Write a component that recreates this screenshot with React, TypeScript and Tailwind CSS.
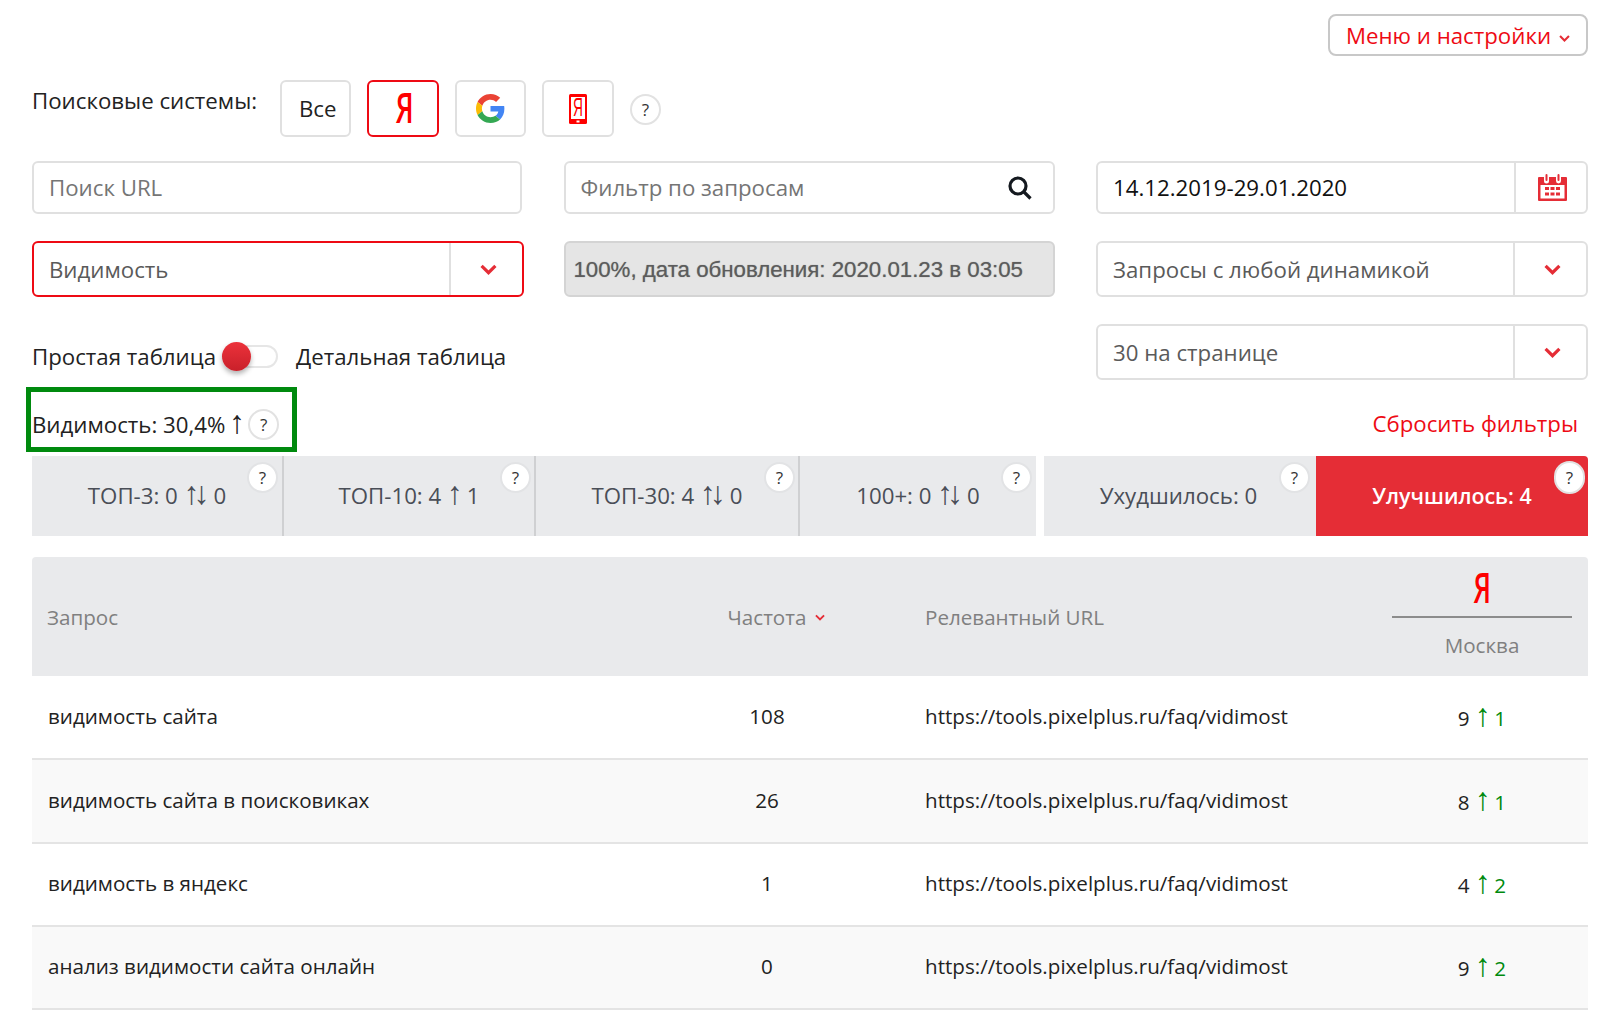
import type { ReactNode } from "react";

const stats = [
  { label: "ТОП-3: 0", arrows: "↑↓", after: "0", width: "w-[252px]", help: "right-[4px]", divider: true },
  { label: "ТОП-10: 4", arrows: "↑", after: "1", width: "w-[252px]", help: "right-[3px]", divider: true },
  { label: "ТОП-30: 4", arrows: "↑↓", after: "0", width: "w-[264px]", help: "right-[3px]", divider: true },
  { label: "100+: 0", arrows: "↑↓", after: "0", width: "w-[236px]", help: "right-[4px]", divider: false },
];

const rows = [
  { query: "видимость сайта", freq: "108", pos: "9", delta: "1" },
  { query: "видимость сайта в поисковиках", freq: "26", pos: "8", delta: "1" },
  { query: "видимость в яндекс", freq: "1", pos: "4", delta: "2" },
  { query: "анализ видимости сайта онлайн", freq: "0", pos: "9", delta: "2" },
];

function Help({ className = "" }: { className?: string }) {
  return (
    <span
      className={`flex h-[31px] w-[31px] items-center justify-center rounded-full border-2 border-[#e2e2e2] bg-white text-[17px] text-[#333] ${className}`}
    >
      ?
    </span>
  );
}

function Arrows({ children }: { children: ReactNode }) {
  return <span className="font-['Liberation_Sans',sans-serif] text-[32px] leading-[0] font-light tracking-[-6px]">{children}</span>;
}

function Chevron({ className = "" }: { className?: string }) {
  return (
    <svg viewBox="0 0 16 10" className={className} fill="none" stroke="currentColor" strokeWidth="3">
      <path d="M1.5 1.5 8 8l6.5-6.5" />
    </svg>
  );
}

function Yandex({ className = "text-[42px]" }: { className?: string }) {
  return (
    <span className={`inline-block origin-center scale-x-[0.66] leading-none font-semibold text-[#fe0000] ${className}`}>
      Я
    </span>
  );
}

function GoogleLogo() {
  return (
    <svg viewBox="0 0 48 48" className="h-[29px] w-[29px]">
      <path fill="#EA4335" d="M24 9.5c3.54 0 6.71 1.22 9.21 3.6l6.85-6.85C35.9 2.38 30.47 0 24 0 14.62 0 6.51 5.38 2.56 13.22l7.98 6.19C12.43 13.72 17.74 9.5 24 9.5z" />
      <path fill="#4285F4" d="M46.98 24.55c0-1.57-.15-3.09-.38-4.55H24v9.02h12.94c-.58 2.96-2.26 5.48-4.78 7.18l7.73 6c4.51-4.18 7.09-10.36 7.09-17.65z" />
      <path fill="#FBBC05" d="M10.53 28.59c-.48-1.45-.76-2.99-.76-4.59s.27-3.14.76-4.59l-7.98-6.19C.92 16.46 0 20.12 0 24c0 3.88.92 7.54 2.56 10.78l7.97-6.19z" />
      <path fill="#34A853" d="M24 48c6.48 0 11.93-2.13 15.89-5.81l-7.73-6c-2.15 1.45-4.92 2.3-8.16 2.3-6.26 0-11.57-4.22-13.47-9.91l-7.98 6.19C6.51 42.62 14.62 48 24 48z" />
    </svg>
  );
}

function PhoneYandex() {
  return (
    <svg viewBox="0 0 18 30" className="h-[30px] w-[18px]">
      <rect x="0" y="0" width="18" height="30" rx="1.5" fill="#fe0000" />
      <rect x="2" y="3" width="14" height="22" fill="#fff" />
      <rect x="7.5" y="26.5" width="3" height="2" fill="#fff" />
      <text x="9" y="22.5" textAnchor="middle" fontSize="25" fill="#fe0000" transform="translate(4 0) scale(0.55 1)" fontFamily="Liberation Sans, sans-serif">
        Я
      </text>
    </svg>
  );
}

function CalendarIcon() {
  return (
    <svg viewBox="0 0 29 27" className="h-[27px] w-[29px]" fill="#e52d36">
      <path d="M1 3h5v4a2.5 2.5 0 0 0 5 0V3h7v4a2.5 2.5 0 0 0 5 0V3h5a1 1 0 0 1 1 1v22a1 1 0 0 1-1 1H1a1 1 0 0 1-1-1V4a1 1 0 0 1 1-1z" />
      <rect x="7.5" y="0" width="2" height="7" rx="1" />
      <rect x="19.5" y="0" width="2" height="7" rx="1" />
      <rect x="2.5" y="11" width="24" height="13.5" fill="#fff" />
      <rect x="7" y="13" width="4" height="3" />
      <rect x="12.5" y="13" width="4" height="3" />
      <rect x="18" y="13" width="4" height="3" />
      <rect x="7" y="18.5" width="4" height="3" />
      <rect x="12.5" y="18.5" width="4" height="3" />
      <rect x="18" y="18.5" width="4" height="3" />
    </svg>
  );
}

function EngineButton({ children, active = false }: { children: ReactNode; active?: boolean }) {
  return (
    <button
      className={`flex h-[57px] w-[71.5px] items-center justify-center rounded-md border-2 bg-white ${
        active ? "border-[#ee0a14]" : "border-[#e0e0e0]"
      }`}
    >
      {children}
    </button>
  );
}

function Select({ label, className = "", divider = "w-[73px]" }: { label: string; className?: string; divider?: string }) {
  return (
    <div className={`flex h-[56px] items-center rounded-md border-2 border-[#e0e0e0] bg-white text-[#5a5a5a] ${className}`}>
      <span className="flex-1 pt-[2px] pl-[15px]">{label}</span>
      <span className={`flex h-full items-center justify-center border-l-2 border-[#e0e0e0] pl-[3px] ${divider}`}>
        <Chevron className="h-[11px] w-[17px] text-[#e52d36]" />
      </span>
    </div>
  );
}

export default function App() {
  return (
    <div className="h-[1036px] w-[1600px] overflow-hidden bg-white pr-3 pl-8 font-['Open_Sans',sans-serif] text-[22.25px] text-[#222]">
      <div className="flex justify-end pt-[14px]">
        <button className="flex h-[42px] w-[260px] items-center justify-center gap-2 rounded-lg border-2 border-[#c8c8c8] bg-white pt-[2px] text-[#ee0a14]">
          Меню и настройки
          <Chevron className="mt-1 h-[7px] w-[11px] text-[#e52d36]" />
        </button>
      </div>

      <div className="mt-[24px] flex items-start">
        <span className="mt-[7px] w-[247.5px] leading-[28px]">Поисковые системы:</span>
        <div className="flex gap-[16px]">
          <EngineButton>
            <span className="mt-[1px] pl-[5px]">Все</span>
          </EngineButton>
          <EngineButton active>
            <span className="pl-[3px]">
              <Yandex />
            </span>
          </EngineButton>
          <EngineButton>
            <GoogleLogo />
          </EngineButton>
          <EngineButton>
            <PhoneYandex />
          </EngineButton>
        </div>
        <Help className="mt-[14px] ml-[16.5px]" />
      </div>

      <div className="mt-[24px] grid grid-cols-[490px_491px_492px] gap-x-[41.5px] gap-y-[27px]">
        <div className="flex h-[53px] items-center rounded-md border-2 border-[#e0e0e0] pl-[15px] text-[#757575]">Поиск URL</div>
        <div className="flex h-[53px] items-center justify-between rounded-md border-2 border-[#e0e0e0] pr-[21px] pl-[15px] text-[#757575]">
          Фильтр по запросам
          <svg viewBox="0 0 24 24" className="h-[24px] w-[24px] text-[#14191f]" fill="none" stroke="currentColor" strokeWidth="3.2">
            <circle cx="10" cy="10" r="8" />
            <path d="m16 16 6.5 6.5" />
          </svg>
        </div>
        <div className="flex h-[53px] items-center rounded-md border-2 border-[#e0e0e0] text-[#111]">
          <span className="flex-1 pl-[15px]">14.12.2019-29.01.2020</span>
          <span className="flex h-full w-[72px] items-center justify-center border-l-2 border-[#e0e0e0] pl-[2px]">
            <CalendarIcon />
          </span>
        </div>

        <Select label="Видимость" className="-mr-[2px] border-[#ee0a14]" />
        <div className="flex h-[56px] items-center rounded-md border-2 border-[#d4d4d4] bg-[#e5e5e5] pt-[2px] pl-[8px] font-['Liberation_Sans',sans-serif] text-[#5c5c5c] [text-shadow:0_0_1px_#888]">
          100%, дата обновления: 2020.01.23 в 03:05
        </div>
        <Select label="Запросы с любой динамикой" />

        <div className="col-span-2 mt-[16px] flex items-center self-start">
          <span className="w-[190px]">Простая таблица</span>
          <span className="relative h-[23px] w-[56px] rounded-full border-2 border-[#e6e6e6] bg-white">
            <span className="absolute top-[-5px] left-[-2px] h-[29px] w-[29px] rounded-full bg-gradient-to-b from-[#ec323b] to-[#c9202a] shadow-[0_3px_5px_rgba(0,0,0,0.3)]" />
          </span>
          <span className="ml-[18px]">Детальная таблица</span>
        </div>
        <Select label="30 на странице" />
      </div>

      <div className="mt-[7px] flex items-center justify-between">
        <div className="-ml-[6px] flex h-[65px] w-[271px] items-center border-[5px] border-[#008a0e] pt-[10px] pl-px whitespace-nowrap">
          <span>
            Видимость: 30,4% <span className="-ml-[2px]"><Arrows>↑</Arrows></span>
          </span>
          <Help className="ml-[9px]" />
        </div>
        <a className="mt-[8px] mr-[10px] text-[#ee0a14]">Сбросить фильтры</a>
      </div>

      <div className="mt-[4px] flex h-[80px] text-[#4a4e57]">
        {stats.map((s) => (
          <div
            key={s.label}
            className={`relative flex items-center justify-center bg-[#e9eaec] ${s.width} ${s.divider ? "border-r-2 border-[#cfd0d2]" : ""}`}
          >
            <span>
              {s.label} <Arrows>{s.arrows}</Arrows> <span className="ml-[4px]">{s.after}</span>
            </span>
            <Help className={`absolute top-[6px] border-[#e2e3e5] ${s.help}`} />
          </div>
        ))}
        <div className="relative ml-2 flex w-[272px] items-center justify-center bg-[#e9eaec] pr-[3px]">
          Ухудшилось: 0
          <Help className="absolute top-[6px] right-[6px] border-[#e2e3e5]" />
        </div>
        <div className="relative flex w-[272px] items-center justify-center rounded-tr bg-[#e52d36] text-[21.4px] font-semibold text-white">
          Улучшилось: 4
          <Help className="absolute top-[5px] right-[3px] h-[33px] border-[#d5d5d5] font-normal" />
        </div>
      </div>

      <table className="mt-[21px] w-full table-fixed border-collapse text-[20.6px]">
        <colgroup>
          <col className="w-[640px]" />
          <col className="w-[190px]" />
          <col className="w-[530px]" />
          <col />
        </colgroup>
        <thead>
          <tr className="h-[119px] bg-[#e9eaec] text-[#808080]">
            <th className="rounded-tl pt-[2px] pl-[15px] text-left font-normal">Запрос</th>
            <th className="pt-[2px] font-normal">
              <span className="relative inline-block">
                Частота
                <Chevron className="absolute top-[12px] left-full ml-[9px] h-[7px] w-[10px] text-[#e52d36]" />
              </span>
            </th>
            <th className="pt-[2px] pl-[63px] text-left font-normal">Релевантный URL</th>
            <th className="rounded-tr pr-[16px] font-normal">
              <div className="flex h-[59px] items-center justify-center border-b-2 border-[#8c8c8c]">
                <Yandex className="text-[41px]" />
              </div>
              <div className="flex h-[57px] items-center justify-center pb-[2px]">Москва</div>
            </th>
          </tr>
        </thead>
        <tbody>
          {rows.map((r, i) => (
            <tr key={r.query} className={`h-[83.3px] border-b-2 border-[#e4e4e4] ${i % 2 ? "bg-[#f9f9f9]" : "bg-white"}`}>
              <td className="pb-[2px] pl-[16px]">{r.query}</td>
              <td className="pb-[2px] text-center">{r.freq}</td>
              <td className="pb-[2px] pl-[63px]">https://tools.pixelplus.ru/faq/vidimost</td>
              <td className="pt-[2px] pr-[16px] text-center">
                {r.pos}{" "}
                <span className="text-[#008a0e]">
                  <Arrows>↑</Arrows> <span className="ml-[4px]">{r.delta}</span>
                </span>
              </td>
            </tr>
          ))}
        </tbody>
      </table>
    </div>
  );
}
